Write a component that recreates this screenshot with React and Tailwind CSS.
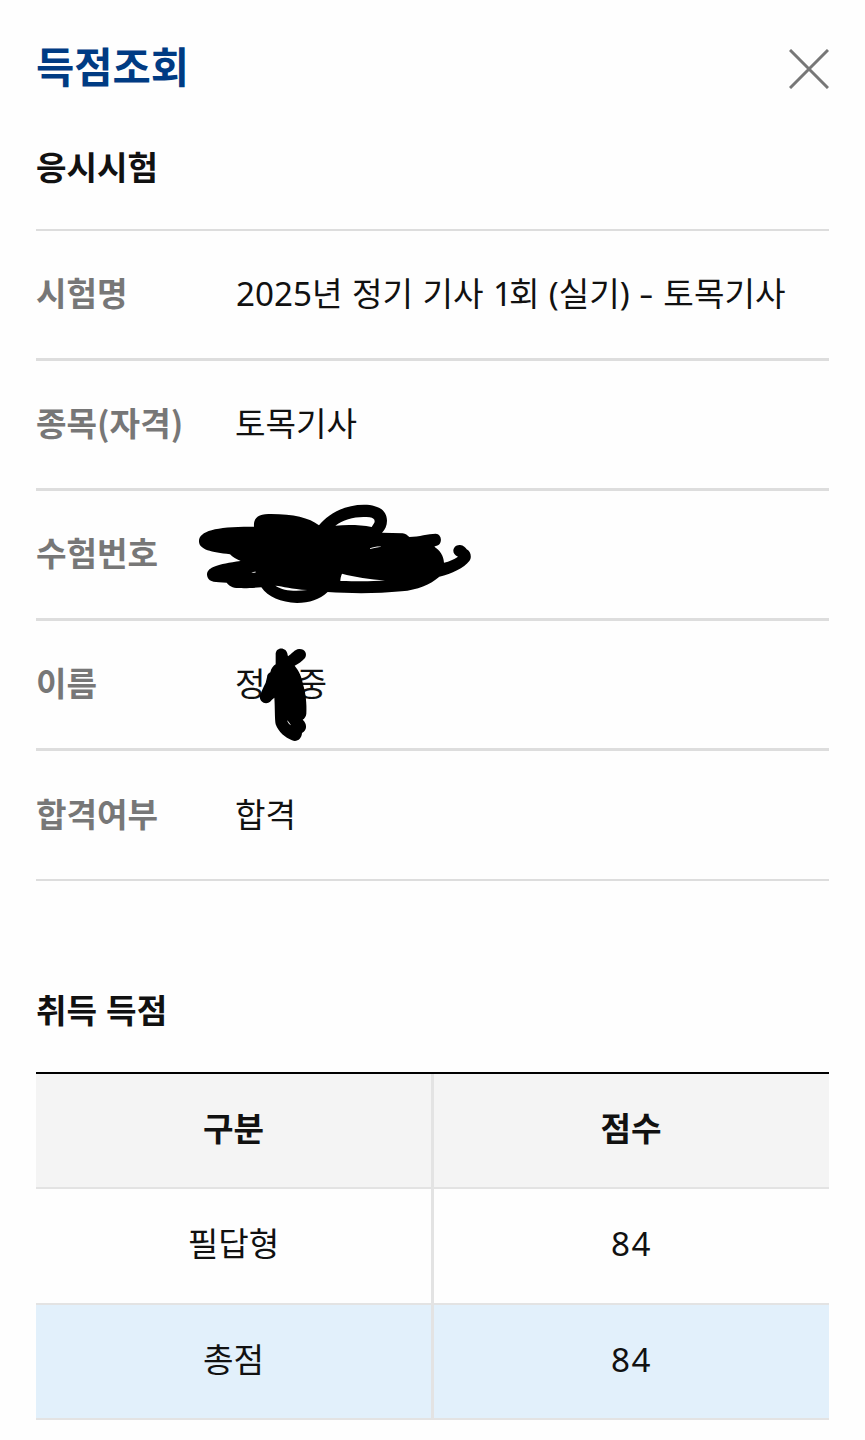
const HAN = "font-['Noto_Sans_CJK_KR',sans-serif]";

function NumberScribble() {
  return (
    <svg className="absolute -left-[45px] -top-px h-[130px] w-[290px]" viewBox="0 0 870 390" aria-hidden="true">
      <path
        fillRule="evenodd"
        fill="#000"
        d="M27 153C28 122 80 109 192 110C190 86 203 72 235 72C305 71 357 82 387 106C413 73 463 44 522 44C566 44 591 62 591 92C591 107 585 119 576 128L638 130C647 131 652 136 658 141C688 140 714 131 737 131C758 132 758 166 737 168L733 170C750 181 761 196 762 218C779 214 791 208 804 200C780 191 790 163 810 165C821 166 827 173 830 178C843 185 846 203 838 213C822 234 786 251 748 260C721 284 682 299 635 304C563 311 482 311 413 306C388 329 359 339 321 339C272 337 234 321 214 292C186 294 166 295 145 294C128 294 116 287 110 278L87 277C62 277 51 268 51 253C53 231 82 223 152 213C139 208 128 202 120 193C64 187 26 179 27 153ZM436 107C462 86 505 77 539 82C552 84 556 91 553 98L545 111C512 105 475 104 436 107ZM540 175C552 171 563 169 574 170C562 172 551 174 540 177ZM456 251C493 261 541 268 585 271C545 275 502 274 451 273C451 265 453 258 456 251ZM256 287C280 289 303 297 352 300C315 305 280 303 256 287ZM184 248C190 245 195 245 199 246C194 248 189 249 184 248Z"
      />
    </svg>
  );
}

function NameScribble() {
  return (
    <svg className="absolute -left-[15px] top-[9px] h-[130px] w-[130px]" viewBox="0 0 390 390" aria-hidden="true">
      <path
        fillRule="evenodd"
        fill="#000"
        d="M167 75C165 49 201 49 203 75L204 79C215 72 224 58 237 57C255 56 263 72 255 84C247 94 234 102 224 107C238 124 245 141 249 163C257 188 261 223 259 251C258 259 254 265 248 269C261 281 263 299 246 309C245 327 231 337 216 331C196 323 175 306 167 283C164 269 165 230 163 203L155 210C142 228 119 219 119 198C125 184 130 171 137 158L141 142C141 134 146 129 151 127C154 114 160 107 167 103ZM201 271C204 279 208 284 213 286C209 280 206 275 201 271Z"
      />
    </svg>
  );
}

function InfoRow({ label, children }) {
  return (
    <div className="flex h-[130px] items-center border-b-3 border-[#dddddd] last:border-b-2">
      <dt className="w-[199px] shrink-0 pb-[5px] font-bold text-[#777777]">{label}</dt>
      <dd className="relative flex h-full grow items-center whitespace-pre pb-[5px]">{children}</dd>
    </div>
  );
}

function Cell({ last, children }) {
  return (
    <div
      className={
        last
          ? "flex items-center justify-center border-b-2 border-[#e3e3e3] pb-[8px] pr-px"
          : "flex items-center justify-center border-b-2 border-r-3 border-[#e3e3e3] pb-[8px]"
      }
    >
      {children}
    </div>
  );
}

function Score({ children }) {
  return <span className="mt-[4px] pl-px font-['Noto_Sans',sans-serif] tracking-[1.5px]">{children}</span>;
}

export default function App() {
  return (
    <main className={`${HAN} h-[1440px] w-[865px] overflow-hidden bg-[#fefefe] px-9 text-[33.2px] leading-[48px] text-[#111111]`}>
      <header className="flex h-[134px] items-center justify-between">
        <h1 className="pb-[5px] text-[41.6px] font-bold leading-[60px] text-[#003b83]">득점조회</h1>
        <button aria-label="닫기" className="mt-1">
          <svg className="block h-10 w-10" viewBox="0 0 40 40" fill="none" stroke="#777777" strokeWidth="3">
            <path d="M1 1 39 39M39 1 1 39" />
          </svg>
        </button>
      </header>

      <section>
        <h2 className="flex h-[95px] items-start pt-[8px] font-bold">응시시험</h2>
        <dl className="border-t-2 border-[#dddddd]">
          <InfoRow label="시험명">
            <span className="mt-[3px] pl-px font-['Noto_Sans','Noto_Sans_CJK_KR',sans-serif] [word-spacing:0.8px]">
              2025년 정기 기사 <span className="tracking-[-3px]">1</span>회 (실기) <span className="mr-[4px] inline-block origin-left scale-x-[1.35]">-</span> 토목기사
            </span>
          </InfoRow>
          <InfoRow label="종목(자격)">토목기사</InfoRow>
          <InfoRow label="수험번호">
            <NumberScribble />
          </InfoRow>
          <InfoRow label="이름">
            정<span className="inline-block w-[31px]" />중
            <NameScribble />
          </InfoRow>
          <InfoRow label="합격여부">합격</InfoRow>
        </dl>
      </section>

      <section className="pt-[104px]">
        <h2 className="flex h-[87px] items-start whitespace-pre font-bold [word-spacing:1.5px]">취득 득점</h2>
        <div className="border-t-2 border-black">
          <div className="grid h-[115px] grid-cols-[398px_1fr] bg-[#f4f4f4] font-bold">
            <Cell>구분</Cell>
            <Cell last>점수</Cell>
          </div>
          <div className="grid h-[116px] grid-cols-[398px_1fr]">
            <Cell>필답형</Cell>
            <Cell last><Score>84</Score></Cell>
          </div>
          <div className="grid h-[115px] grid-cols-[398px_1fr] bg-[#e2f0fb]">
            <Cell>총점</Cell>
            <Cell last><Score>84</Score></Cell>
          </div>
        </div>
      </section>
    </main>
  );
}
